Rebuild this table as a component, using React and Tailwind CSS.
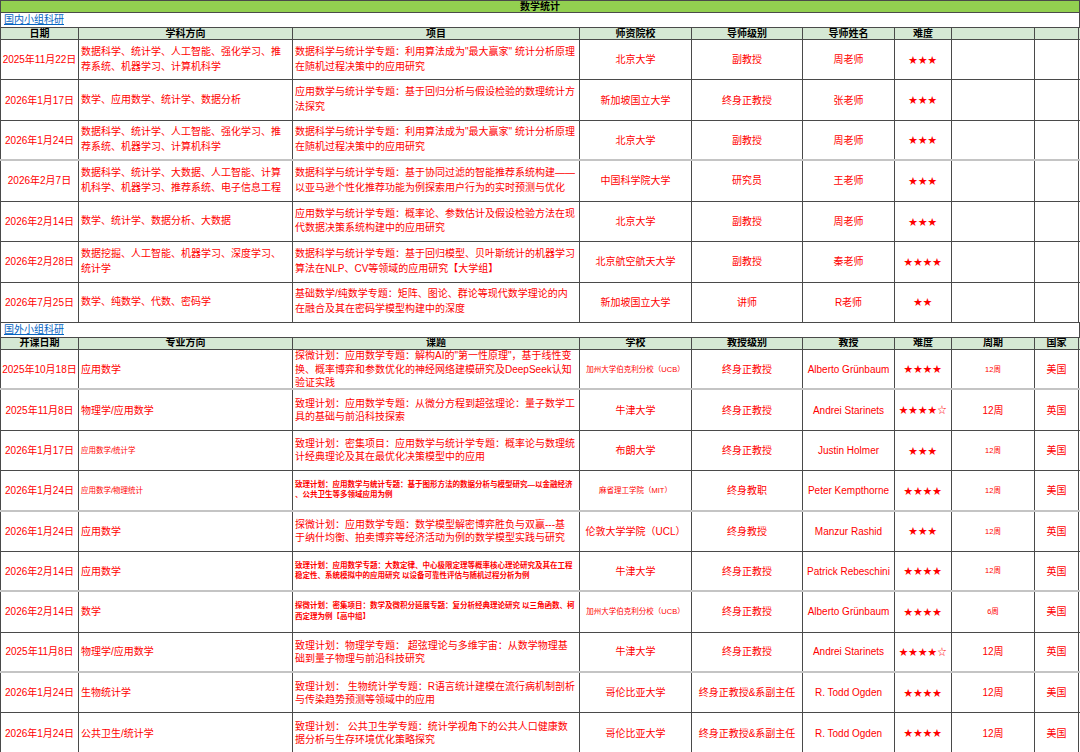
import React from "react";

// 数学统计 — 国内 / 国外小组科研 课程表（仿 Excel 表格）

const COLS = "grid-cols-[79px_214px_287px_112px_111px_92px_57px_83px_44px]";
const LINE = "border-[#4a4a4a]";

const DOMESTIC_HEAD = ["日期", "学科方向", "项目", "师资院校", "导师级别", "导师姓名", "难度", "", ""];
const FOREIGN_HEAD = ["开课日期", "专业方向", "课题", "学校", "教授级别", "教授", "难度", "周期", "国家"];

const DS_MAJOR = ["数据科学、统计学、人工智能、强化学习、推", "荐系统、机器学习、计算机科学"];
const DS_TITLE = ["数据科学与统计学专题：利用算法成为\"最大赢家\" 统计分析原理", "在随机过程决策中的应用研究"];

const domestic = [
  { date: "2025年11月22日", major: DS_MAJOR, title: DS_TITLE, school: "北京大学", level: "副教授", name: "周老师", stars: "★★★" },
  {
    date: "2026年1月17日",
    major: ["数学、应用数学、统计学、数据分析"],
    title: ["应用数学与统计学专题：基于回归分析与假设检验的数理统计方", "法探究"],
    school: "新加坡国立大学",
    level: "终身正教授",
    name: "张老师",
    stars: "★★★",
  },
  { date: "2026年1月24日", major: DS_MAJOR, title: DS_TITLE, school: "北京大学", level: "副教授", name: "周老师", stars: "★★★", soft: true },
  {
    date: "2026年2月7日",
    major: ["数据科学、统计学、大数据、人工智能、计算", "机科学、机器学习、推荐系统、电子信息工程"],
    title: ["数据科学与统计学专题：基于协同过滤的智能推荐系统构建——", "以亚马逊个性化推荐功能为例探索用户行为的实时预测与优化"],
    school: "中国科学院大学",
    level: "研究员",
    name: "王老师",
    stars: "★★★",
  },
  {
    date: "2026年2月14日",
    major: ["数学、统计学、数据分析、大数据"],
    title: ["应用数学与统计学专题：概率论、参数估计及假设检验方法在现", "代数据决策系统构建中的应用研究"],
    school: "北京大学",
    level: "副教授",
    name: "周老师",
    stars: "★★★",
  },
  {
    date: "2026年2月28日",
    major: ["数据挖掘、人工智能、机器学习、深度学习、", "统计学"],
    title: ["数据科学与统计学专题：基于回归模型、贝叶斯统计的机器学习", "算法在NLP、CV等领域的应用研究【大学组】"],
    school: "北京航空航天大学",
    level: "副教授",
    name: "秦老师",
    stars: "★★★★",
  },
  {
    date: "2026年7月25日",
    major: ["数学、纯数学、代数、密码学"],
    title: ["基础数学/纯数学专题：矩阵、图论、群论等现代数学理论的内", "在融合及其在密码学模型构建中的深度"],
    school: "新加坡国立大学",
    level: "讲师",
    name: "R老师",
    stars: "★★",
  },
];

const foreign = [
  {
    date: "2025年10月18日",
    major: ["应用数学"],
    title: [
      "探微计划：应用数学专题：解构AI的\"第一性原理\"，基于线性变",
      "换、概率博弈和参数优化的神经网络建模研究及DeepSeek认知",
      "验证实践",
    ],
    school: "加州大学伯克利分校（UCB）",
    schoolSm: true,
    level: "终身正教授",
    name: "Alberto Grünbaum",
    stars: "★★★★",
    period: "12周",
    periodSm: true,
    country: "美国",
    soft: true,
  },
  {
    date: "2025年11月8日",
    major: ["物理学/应用数学"],
    title: ["致理计划：应用数学专题：从微分方程到超弦理论：量子数学工", "具的基础与前沿科技探索"],
    school: "牛津大学",
    level: "终身正教授",
    name: "Andrei Starinets",
    stars: "★★★★☆",
    period: "12周",
    country: "英国",
  },
  {
    date: "2026年1月17日",
    major: ["应用数学/统计学"],
    majorSm: true,
    title: ["致理计划：密集项目：应用数学与统计学专题：概率论与数理统", "计经典理论及其在最优化决策模型中的应用"],
    school: "布朗大学",
    level: "终身正教授",
    name: "Justin Holmer",
    stars: "★★★",
    period: "12周",
    periodSm: true,
    country: "美国",
  },
  {
    date: "2026年1月24日",
    major: ["应用数学/物理统计"],
    majorSm: true,
    title: ["致理计划：应用数学与统计专题：基于图形方法的数据分析与模型研究—以金融经济", "、公共卫生等多领域应用为例"],
    titleSm: true,
    school: "麻省理工学院（MIT）",
    schoolSm: true,
    level: "终身教职",
    name: "Peter Kempthorne",
    stars: "★★★★",
    period: "12周",
    periodSm: true,
    country: "美国",
    soft: true,
  },
  {
    date: "2026年1月24日",
    major: ["应用数学"],
    title: ["探微计划：应用数学专题：数学模型解密博弈胜负与双赢---基", "于纳什均衡、拍卖博弈等经济活动为例的数学模型实践与研究"],
    school: "伦敦大学学院（UCL）",
    level: "终身教授",
    name: "Manzur Rashid",
    stars: "★★★",
    period: "12周",
    periodSm: true,
    country: "英国",
  },
  {
    date: "2026年2月14日",
    major: ["应用数学"],
    title: ["致理计划：应用数学专题：大数定律、中心极限定理等概率核心理论研究及其在工程", "稳定性、系统模拟中的应用研究 以设备可靠性评估与随机过程分析为例"],
    titleSm: true,
    school: "牛津大学",
    level: "终身正教授",
    name: "Patrick Rebeschini",
    stars: "★★★★",
    period: "12周",
    periodSm: true,
    country: "英国",
    soft: true,
  },
  {
    date: "2026年2月14日",
    major: ["数学"],
    title: ["探微计划：密集项目：数学及微积分延展专题：复分析经典理论研究 以三角函数、柯", "西定理为例【高中组】"],
    titleSm: true,
    school: "加州大学伯克利分校（UCB）",
    schoolSm: true,
    level: "终身正教授",
    name: "Alberto Grünbaum",
    stars: "★★★★",
    period: "6周",
    periodSm: true,
    country: "美国",
  },
  {
    date: "2025年11月8日",
    major: ["物理学/应用数学"],
    title: ["致理计划：物理学专题： 超弦理论与多维宇宙：从数学物理基", "础到量子物理与前沿科技研究"],
    school: "牛津大学",
    level: "终身正教授",
    name: "Andrei Starinets",
    stars: "★★★★☆",
    period: "12周",
    country: "英国",
    soft: true,
  },
  {
    date: "2026年1月24日",
    major: ["生物统计学"],
    title: ["致理计划： 生物统计学专题：R语言统计建模在流行病机制剖析", "与传染趋势预测等领域中的应用"],
    school: "哥伦比亚大学",
    level: "终身正教授&系副主任",
    name: "R. Todd Ogden",
    stars: "★★★★",
    period: "12周",
    country: "美国",
  },
  {
    date: "2026年1月24日",
    major: ["公共卫生/统计学"],
    title: ["致理计划： 公共卫生学专题：统计学视角下的公共人口健康数", "据分析与生存环境优化策略探究"],
    school: "哥伦比亚大学",
    level: "终身正教授&系副主任",
    name: "R. Todd Ogden",
    stars: "★★★★",
    period: "12周",
    country: "美国",
  },
];

function Cell({ children, left, first, className = "" }) {
  return (
    <div
      className={`flex items-center overflow-hidden border-r ${LINE} ${first ? "border-l" : ""} ${
        left ? "justify-start px-[2px]" : "justify-center px-[1px]"
      } ${className}`}
    >
      {children}
    </div>
  );
}

function Lines({ lines, lead }) {
  return (
    <div className={`whitespace-nowrap ${lead}`}>
      {lines.map((l, i) => (
        <div key={i}>{l}</div>
      ))}
    </div>
  );
}

function Stars({ s }) {
  return <span className="text-[9px] tracking-[0.6px] text-[#ff0000] font-['Noto_Sans_CJK_SC',sans-serif]">{s}</span>;
}

function SectionLink({ label }) {
  return (
    <div className={`h-[14px] flex items-center pl-[3px] border-x ${LINE}`}>
      <span className="text-[10px] leading-none text-[#0563c1] underline underline-offset-1">{label}</span>
    </div>
  );
}

function Header({ cols }) {
  return (
    <div className={`grid ${COLS} h-[13px] bg-[#d5e8d4] border-y ${LINE}`}>
      {cols.map((c, i) => (
        <Cell key={i} first={i === 0} className="text-[10px] font-bold leading-none text-black">
          {c}
        </Cell>
      ))}
    </div>
  );
}

function DataRow({ r, lead, h }) {
  const small = "text-[7.5px]";
  const border = r.soft ? "border-b-2 border-b-[#c4c4c4]" : `border-b ${LINE}`;
  return (
    <div className={`grid ${COLS} ${h} ${border} text-[10px] text-[#ff0000]`}>
      <Cell first className="whitespace-nowrap">{r.date}</Cell>
      <Cell left className={r.majorSm ? small : ""}>
        <Lines lines={r.major} lead={lead} />
      </Cell>
      <Cell left className={r.titleSm ? `${small} font-bold` : ""}>
        <Lines lines={r.title} lead={r.titleSm ? "leading-[10.5px]" : r.title.length > 2 ? "leading-[13.3px]" : lead} />
      </Cell>
      <Cell className={`whitespace-nowrap ${r.schoolSm ? small : ""}`}>{r.school}</Cell>
      <Cell className="whitespace-nowrap">{r.level}</Cell>
      <Cell className="whitespace-nowrap">{r.name}</Cell>
      <Cell>
        <Stars s={r.stars} />
      </Cell>
      <Cell className={`whitespace-nowrap ${r.periodSm ? small : ""}`}>{r.period || ""}</Cell>
      <Cell className="whitespace-nowrap">{r.country || ""}</Cell>
    </div>
  );
}

export default function App() {
  return (
    <div className="w-[1080px] h-[752px] overflow-hidden bg-white text-black font-['Liberation_Sans','Noto_Sans_CJK_SC',sans-serif]">
      <div className={`h-[13px] bg-[#92d050] border ${LINE} flex items-center justify-center`}>
        <span className="text-[10px] font-bold leading-none">数学统计</span>
      </div>

      <SectionLink label="国内小组科研" />
      <Header cols={DOMESTIC_HEAD} />
      {domestic.map((r, i) => (
        <DataRow key={i} r={r} lead="leading-[14.8px]" h="h-[40.43px]" />
      ))}

      <SectionLink label="国外小组科研" />
      <Header cols={FOREIGN_HEAD} />
      {foreign.map((r, i) => (
        <DataRow key={i} r={r} lead="leading-[13px]" h="h-[40.4px]" />
      ))}
    </div>
  );
}
